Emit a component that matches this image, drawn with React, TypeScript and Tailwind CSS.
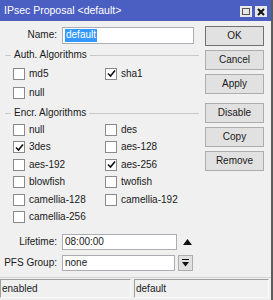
import type { ReactNode } from "react";

function Check({ on }: { on?: boolean }) {
  return (
    <span className="w-[12px] h-[12px] border border-[#8a8a8a] bg-white flex items-center justify-center shrink-0">
      {on && (
        <svg width="9" height="9" viewBox="0 0 9 9">
          <path d="M1 4.5 L3.5 7 L8 1.5" fill="none" stroke="#111" strokeWidth="1.6" />
        </svg>
      )}
    </span>
  );
}

function Opt({ label, on }: { label: string; on?: boolean }) {
  return (
    <div className="w-[92px] flex items-center gap-[4px]">
      <Check on={on} />
      <span className="text-[#1a1a1a]">{label}</span>
    </div>
  );
}

function Group({ title }: { title: string }) {
  return (
    <div className="h-[12px] flex items-center pl-[5px] pr-[6px]">
      <span className="w-[6px] h-px bg-[#c8c8c8]" />
      <span className="px-[3px] text-[#1a1a1a]">{title}</span>
      <span className="flex-1 h-px bg-[#c8c8c8]" />
    </div>
  );
}

function Btn({ children }: { children: ReactNode }) {
  return (
    <div className="h-[20px] w-[59px] border border-[#adadad] bg-[#e1e1e1] flex items-center justify-center text-[#1a1a1a]">
      {children}
    </div>
  );
}

export default function App() {
  const auth = [
    [{ label: "md5" }, { label: "sha1", on: true }],
    [{ label: "null" }],
  ];
  const encr = [
    [{ label: "null" }, { label: "des" }],
    [{ label: "3des", on: true }, { label: "aes-128" }],
    [{ label: "aes-192" }, { label: "aes-256", on: true }],
    [{ label: "blowfish" }, { label: "twofish" }],
    [{ label: "camellia-128" }, { label: "camellia-192" }],
    [{ label: "camellia-256" }],
  ];

  return (
    <div
      className="w-[273px] h-[300px] bg-[#f0f0f0] flex flex-col border-r-2 border-[#5c5c5c] text-[10px] leading-none"
      style={{ fontFamily: '"Liberation Sans", Arial, sans-serif' }}
    >
      {/* Title bar */}
      <div className="h-[21px] bg-[#4b5ec1] flex items-center pl-[4px] pr-[4px] shrink-0">
        <span className="text-white text-[10.5px] flex-1">IPsec Proposal &lt;default&gt;</span>
        <div className="flex gap-[3px] mt-[2px]">
          <span className="w-[12px] h-[11px] bg-[#e8e8e8] flex items-center justify-center">
            <span className="w-[8px] h-[7px] border border-[#555]" />
          </span>
          <span className="w-[12px] h-[11px] bg-[#e8e8e8] flex items-center justify-center">
            <svg width="8" height="8" viewBox="0 0 8 8">
              <path d="M1 1 L7 7 M7 1 L1 7" stroke="#111" strokeWidth="2" />
            </svg>
          </span>
        </div>
      </div>

      <div className="flex flex-1">
        {/* Left column */}
        <div className="w-[205px] flex flex-col">
          <div className="h-[18px] mt-[5px] flex items-center">
            <span className="w-[60px] text-right pr-[3px] text-[#1a1a1a]">Name:</span>
            <div className="w-[132px] h-[17px] ml-[2px] border border-[#abadb3] bg-white flex items-center px-[2px]">
              <span className="bg-[#3399ff] text-white h-[13px] flex items-center px-[1px]">default</span>
            </div>
          </div>

          <div className="mt-[5px]">
            <Group title="Auth. Algorithms" />
          </div>
          <div className="mt-[3px] flex flex-col pl-[13px]">
            {auth.map((r, i) => (
              <div key={i} className="h-[19px] flex items-center">
                {r.map((o) => (
                  <Opt key={o.label} label={o.label} on={o.on} />
                ))}
              </div>
            ))}
          </div>

          <div className="mt-[5px]">
            <Group title="Encr. Algorithms" />
          </div>
          <div className="mt-[2px] flex flex-col pl-[13px]">
            {encr.map((r, i) => (
              <div key={i} className="h-[17.5px] flex items-center">
                {r.map((o) => (
                  <Opt key={o.label} label={o.label} on={o.on} />
                ))}
              </div>
            ))}
          </div>

          <div className="h-[17px] mt-[7px] flex items-center">
            <span className="w-[60px] text-right pr-[3px] text-[#1a1a1a]">Lifetime:</span>
            <div className="w-[115px] h-[16px] ml-[2px] border border-[#abadb3] bg-white flex items-center px-[2px] text-[#1a1a1a]">
              08:00:00
            </div>
            <svg width="9" height="6" viewBox="0 0 9 6" className="ml-[6px]">
              <path d="M0 6 L4.5 0 L9 6 Z" fill="#111" />
            </svg>
          </div>

          <div className="h-[17px] mt-[4px] flex items-center">
            <span className="w-[60px] text-right pr-[3px] text-[#1a1a1a]">PFS Group:</span>
            <div className="w-[113px] h-[16px] ml-[2px] border border-[#abadb3] bg-white flex items-center px-[2px] text-[#1a1a1a]">
              none
            </div>
            <div className="w-[15px] h-[16px] ml-[3px] border border-[#adadad] bg-[#e1e1e1] flex items-center justify-center">
              <svg width="7" height="8" viewBox="0 0 7 8">
                <path d="M0 0.5 H7" stroke="#111" strokeWidth="1" />
                <path d="M0 3 L3.5 7.5 L7 3 Z" fill="#111" />
              </svg>
            </div>
          </div>
        </div>

        {/* Right column */}
        <div className="flex flex-col pt-[5px]">
          <div className="flex flex-col gap-[4px]">
            <div className="h-[20px] w-[59px] border border-[#707070] bg-[#e1e1e1] flex items-center justify-center text-[#1a1a1a]">
              OK
            </div>
            <Btn>Cancel</Btn>
            <Btn>Apply</Btn>
          </div>
          <div className="flex flex-col gap-[4px] mt-[9px]">
            <Btn>Disable</Btn>
            <Btn>Copy</Btn>
            <Btn>Remove</Btn>
          </div>
        </div>
      </div>

      {/* Status bar */}
      <div className="h-[23px] border-t border-[#d4d4d4] flex gap-[3px] pt-[1px] pb-[2px] pr-[2px] shrink-0">
        <div className="w-[131px] border border-t-[#a0a0a0] border-l-[#a0a0a0] border-b-[#fafafa] border-r-[#fafafa] flex items-center pl-[1px] text-[#1a1a1a]">
          enabled
        </div>
        <div className="flex-1 border border-t-[#a0a0a0] border-l-[#a0a0a0] border-b-[#fafafa] border-r-[#fafafa] flex items-center pl-[1px] text-[#1a1a1a]">
          default
        </div>
      </div>
    </div>
  );
}
